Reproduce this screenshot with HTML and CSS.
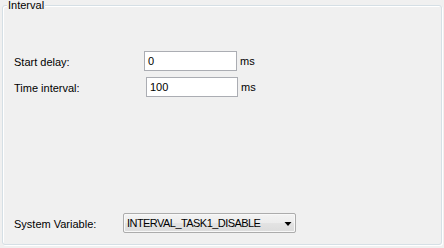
FILE: index.html
```html
<!DOCTYPE html>
<html>
<head>
<meta charset="utf-8">
<link rel="stylesheet" href="styles.css">
</head>
<body>
<div class="group">
  <span class="legend">Interval</span>
  <div class="rows">
    <div class="row">
      <span class="label">Start delay:</span>
      <div class="field"><span class="value">0</span></div>
      <span class="unit">ms</span>
    </div>
    <div class="row row2">
      <span class="label">Time interval:</span>
      <div class="field"><span class="value">100</span></div>
      <span class="unit">ms</span>
    </div>
  </div>
  <div class="sysrow">
    <span class="label sys">System Variable:</span>
    <div class="combo">
      <span class="value combo-text">INTERVAL_TASK1_DISABLE</span>
      <svg class="arrow" width="7" height="4" viewBox="0 0 7 4"><path d="M0 0H7L3.5 4Z" fill="#000"/></svg>
    </div>
  </div>
</div>
</body>
</html>
```
FILE: styles.css
```css
* { box-sizing: border-box; }
html, body { margin: 0; padding: 0; }
body {
  width: 444px;
  height: 248px;
  background: #f0f0f0;
  font-family: "Liberation Sans", sans-serif;
  font-size: 11px;
  color: #000;
  padding: 5px 2px 3px 2px;
  overflow: hidden;
}
.group {
  position: relative;
  height: 240px;
  border: 1px solid #d5dfe5;
  border-radius: 3px;
  box-shadow: inset 1px 1px 0 #fff, 1px 1px 0 #fff;
  display: flex;
  flex-direction: column;
  padding: 45px 0 0 11px;
}
.legend {
  position: absolute;
  top: -7px;
  left: 4px;
  padding: 0 1px;
  background: #f0f0f0;
  font-size: 11px;
  line-height: 13px;
}
.rows { display: flex; flex-direction: column; gap: 6px; }
.row { display: flex; align-items: center; height: 20px; }
.label {
  width: 130px;
  flex: none;
  padding-top: 1px;
}
.row2 .label { width: 132px; }
.field {
  width: 93px;
  height: 20px;
  background: #fff;
  border: 1px solid #abadb3;
  display: flex;
  align-items: center;
  padding-left: 3px;
}
.row2 .field { width: 92px; }
.unit { margin-left: 3px; }
.sysrow {
  margin-top: auto;
  margin-bottom: 11px;
  display: flex;
  align-items: center;
  height: 20px;
}
.label.sys { width: 109px; }
.combo {
  width: 173px;
  height: 20px;
  border: 1px solid #acacac;
  border-radius: 2px;
  background: linear-gradient(#f3f3f3, #ececec 50%, #e3e3e3 51%, #dcdcdc);
  box-shadow: inset 0 0 0 1px #f8f8f8;
  display: flex;
  align-items: center;
  justify-content: space-between;
  padding: 0 3px 0 3px;
}
.combo-text { letter-spacing: -0.55px; }
.arrow { flex: none; width: 8px; margin-top: 1px; }
```
